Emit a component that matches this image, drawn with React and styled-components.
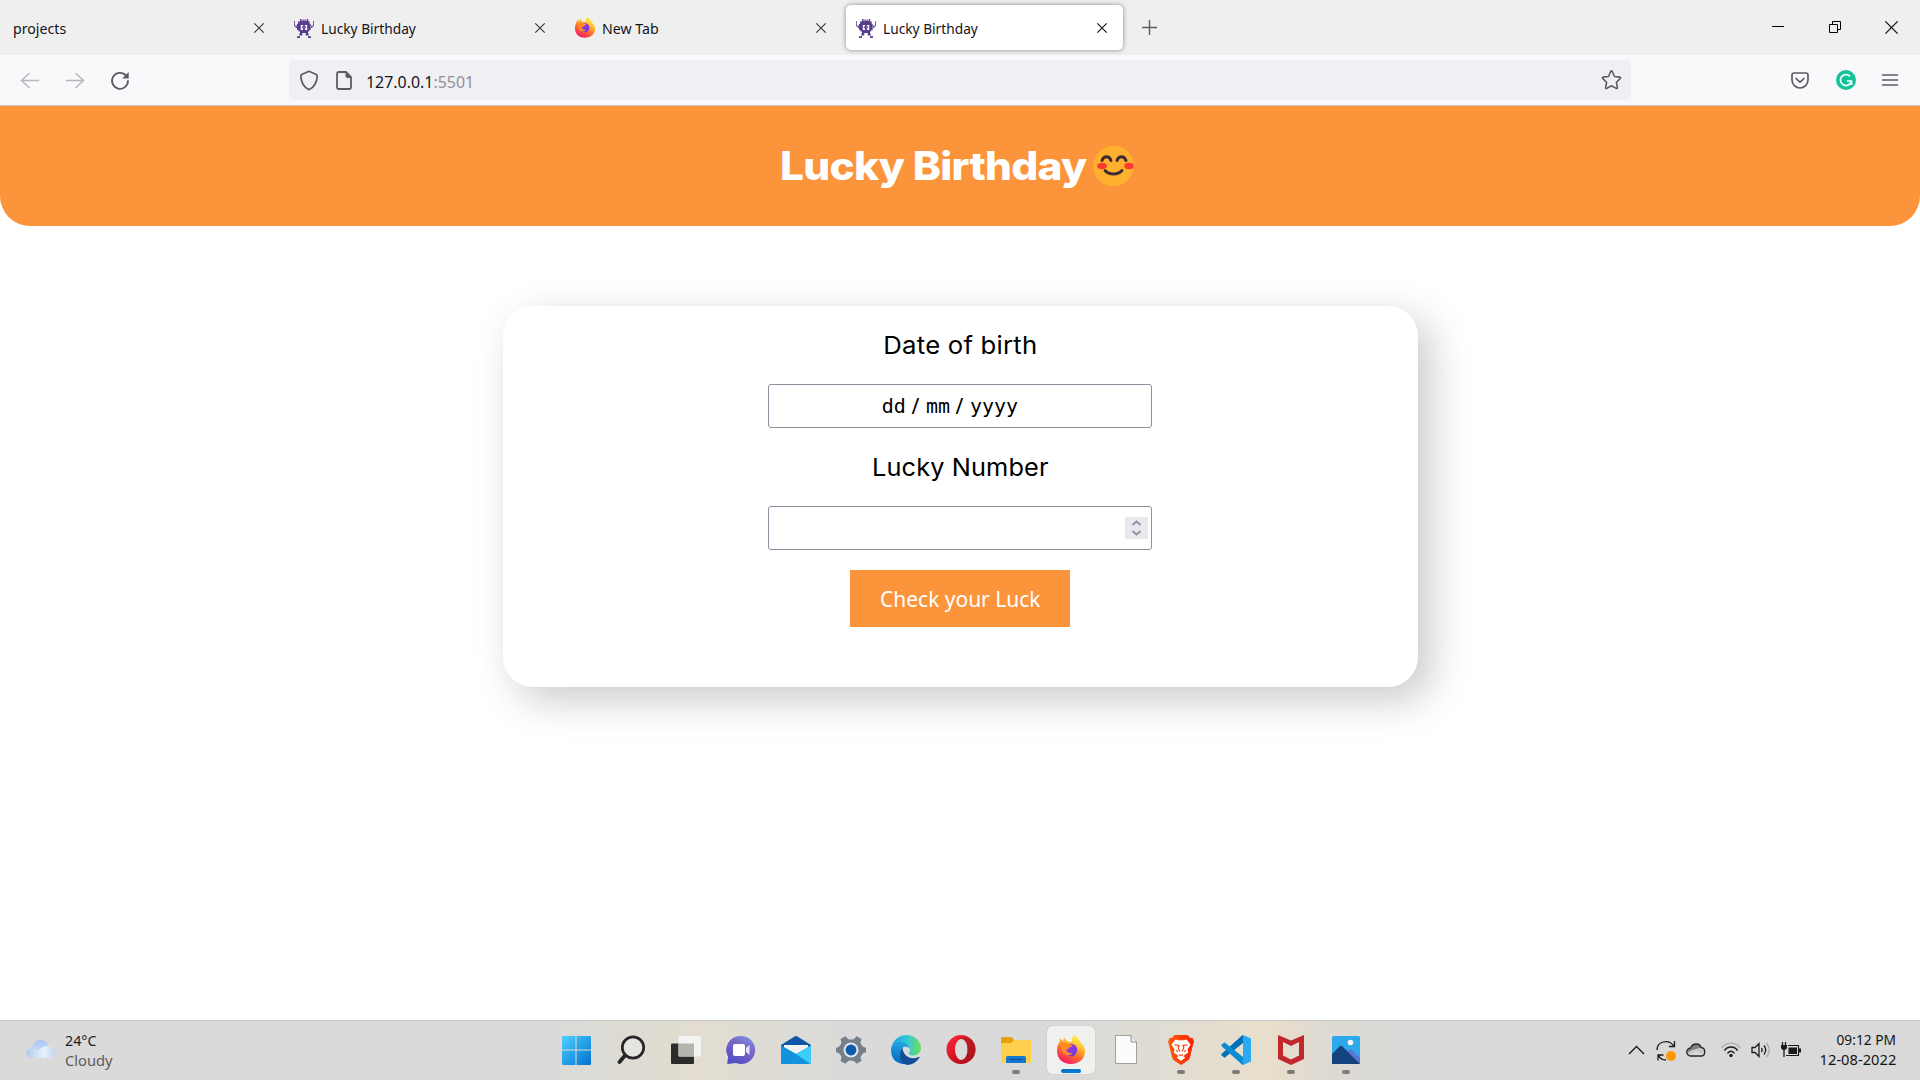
import React from "react";
import styled, { createGlobalStyle } from "styled-components";

const Global = createGlobalStyle`
  * { box-sizing: border-box; }
  body { margin: 0; background: #fff; overflow: hidden; font-family: "Noto Sans", sans-serif; }
  svg { display: block; flex: none; overflow: visible; }
`;
const Screen = styled.div`width: 1920px; height: 1080px; display: flex; flex-direction: column; overflow: hidden;`;

/* browser chrome */
const TabBar = styled.div`height: 55px; flex: none; background: #efefef; display: flex; align-items: flex-start; padding: 5px 0 0 3px;`;
const Tab = styled.div`
  width: 277px; height: 45px; margin-right: 4px; padding: 0 16px 0 10px; border-radius: 5px;
  display: flex; align-items: center; color: #15141a;
  background: ${p => (p.$active ? "#fff" : "transparent")};
  box-shadow: ${p => (p.$active ? "0 0 5px rgba(0,0,0,.42)" : "none")};
`;
const TabTitle = styled.span`
  flex: 1; font-size: 15px; line-height: 20px; margin-left: ${p => (p.$bare ? "0" : "7px")};
  white-space: nowrap;
`;
const Fit = styled.span`display: inline-block; transform-origin: ${p => p.$origin || "0 50%"}; transform: scaleX(${p => p.$x});`;
const NewTab = styled.div`width: 45px; height: 45px; display: flex; align-items: center; justify-content: center;`;
const WindowButtons = styled.div`
  margin-left: auto; width: 171px; height: 44px; display: flex; align-items: center;
`;
const WindowButton = styled.div`width: 57px; display: flex; justify-content: center;`;
const NavBar = styled.div`
  height: 51px; flex: none; background: #f9f9fb; border-bottom: 1px solid #c9c9ce;
  display: flex; align-items: center; padding: 0 22px 0 20px;
`;
const NavButtons = styled.div`width: 269px; display: flex; gap: 25px;`;
const UrlBar = styled.div`
  width: 1342px; height: 40px; border-radius: 5px; background: #f0f0f4; display: flex; align-items: center;
  padding: 0 9px 0 10px;
`;
const PageIcon = styled.div`margin-left: 17px;`;
const Url = styled.div`flex: 1; margin: 3px 0 0 14px; font-size: 16.5px; line-height: 22px; color: #15141a;`;
const Port = styled.span`color: #8f8f9d;`;
const Tools = styled.div`margin-left: auto; display: flex; gap: 26.5px; align-items: center;`;

/* page */
const Page = styled.main`flex: 1; display: flex; flex-direction: column; align-items: center; background: #fff;`;
const Header = styled.header`
  width: 100%; height: 120px; background: #fc943c; border-radius: 0 0 30px 30px;
  display: flex; align-items: center; justify-content: center; padding-right: 7px;
`;
const Title = styled.h1`
  margin: 0 8px 0 0; width: 305px; color: #fff; font: 800 39px/60px Inter, sans-serif; white-space: nowrap;
  letter-spacing: -0.7px;
`;
const Card = styled.section`
  width: 915px; height: 381px; margin-top: 80px; border-radius: 30px; background: #fff;
  box-shadow: 13px 13px 40px rgba(0,0,0,.21);
  display: flex; flex-direction: column; align-items: center; padding-top: 20px;
`;
const Label = styled.label`
  height: 38px; font: 400 24.5px/38px Inter, sans-serif; color: #000; letter-spacing: ${p => p.$spacing};
`;
const Field = styled.div`
  width: 384px; height: 44px; margin: 20px 0; border: 1px solid #8f8f9d; border-radius: 3px; background: #fff;
  display: flex; align-items: center; justify-content: ${p => (p.$number ? "flex-end" : "center")};
  padding: ${p => (p.$number ? "0 3px" : "0 20px 0 0")};
`;
const DateText = styled.div`display: flex; font: 20px/28px "DejaVu Sans Mono", monospace; color: #000;`;
const Slash = styled.span`width: 20px; padding-right: 1px; text-align: center; font-family: "Noto Sans", sans-serif; font-size: 21px;`;
const Spinner = styled.div`width: 23px; height: 22px; background: #e9e9ed; display: flex; align-items: center; justify-content: center;`;
const Submit = styled.button`
  width: 220px; height: 57px; border: 0; padding: 0; background: #fc943c; color: #fff;
  font: 400 21.5px/30px "Noto Sans", sans-serif; white-space: nowrap;
`;

/* taskbar */
const Taskbar = styled.footer`
  height: 60px; flex: none; border-top: 1px solid #c5c7c7; display: flex; align-items: center; padding-bottom: 1px;
  background: linear-gradient(90deg, #dadada 0 530px, #dddbd2 640px, #e2ddd0 700px, #dadada 850px, #dadada 1070px,
    #e0ddd2 1170px, #e9decb 1270px, #dfdad1 1320px, #d9d9d9 1400px);
`;
const Weather = styled.div`width: 552px; padding: 0 0 1px 26px; display: flex; align-items: center; gap: 9px;`;
const WeatherText = styled.div`font-size: 15px; line-height: 20px; color: #1a1a1a;`;
const Muted = styled.div`color: #5c5c5c;`;
const Apps = styled.div`display: flex; gap: 7px;`;
const AppButton = styled.div`
  width: 48px; height: 48px; border-radius: 5px; display: flex; flex-direction: column; align-items: center;
  padding-top: 9px; background: ${p => (p.$active ? "#f0f0ee" : "transparent")};
  box-shadow: ${p => (p.$active ? "0 0 1px rgba(0,0,0,.3)" : "none")};
`;
const Dot = styled.div`
  height: 4px; border-radius: 2px; margin-top: 5px; width: ${p => (p.$active ? "20px" : "8px")};
  background: ${p => (p.$active ? "#0078d4" : "#7d7b77")};
`;
const Tray = styled.div`margin-left: auto; padding-right: 24px; display: flex; align-items: center;`;
const TrayItem = styled.div`margin-right: ${p => p.$gap}px;`;
const Clock = styled.div`
  width: 78px; padding-bottom: 2px; display: flex; flex-direction: column; align-items: flex-end;
  font-size: 15px; line-height: 20px; color: #151515; white-space: nowrap;
`;

const Close = ({ size = 10, color = "#333", w = 1.1 }) => (
  <svg width={size} height={size} viewBox="0 0 10 10"><path d="M.3.3 9.7 9.7M9.7.3.3 9.7" stroke={color} strokeWidth={w} /></svg>
);
const Alien = () => (
  <svg width="20" height="20" viewBox="0 0 20 20" fill="#5a3e8e">
    <path d="M6 1h1.500v2h1V1.500h1.200V3h.8V1.500h1.200V3h1V1h1.500v2.500h1.500V6h1v6h-1.500v1.500H14V15H6v-1.500H4.500V12H3V6h1V3.500h2ZM5.500 15h2.800v2.500H6V20H3v-1.700h2.500ZM11.700 15h2.800v3.300H17V20h-3v-2.500h-2.300Z" />
    <path d="M0 3h1v4.500h2V10H1.500V8.500H0ZM20 3h-1v4.500h-2V10h1.500V8.500H20Z" opacity=".8" />
    <path d="M6.800 7h2.300v5H6.800ZM10.900 7h2.300v5h-2.300Z" fill="#fff" /><path d="M7.900 8h1.200v2.500H7.900ZM10.900 8h1.200v2.500h-1.200Z" fill="#8d78b3" />
  </svg>
);
const Firefox = ({ size = 21, id }) => (
  <svg width={size} height={size * 1.05} viewBox="0 0 28 29.4">
    <defs>
      <linearGradient id={id + "a"} x1=".8" y1=".05" x2=".3" y2="1">
        <stop offset="0" stopColor="#fff44f" /><stop offset=".35" stopColor="#ffb72e" /><stop offset=".62" stopColor="#ff6a2b" /><stop offset="1" stopColor="#f5156c" />
      </linearGradient>
      <linearGradient id={id + "b"} x1="0" y1="0" x2="1" y2="1"><stop offset="0" stopColor="#b833e1" /><stop offset="1" stopColor="#5b3fd8" /></linearGradient>
      <linearGradient id={id + "c"} x1=".5" y1="0" x2=".4" y2="1"><stop offset="0" stopColor="#fff04a" /><stop offset=".5" stopColor="#ffc936" /><stop offset="1" stopColor="#ff6b35" stopOpacity=".3" /></linearGradient>
    </defs>
    <path d="M17 0c3 2.200 5 4.300 6 7 2.500 1.800 5 5 5 9.500C28 24 22 29 14 29S0 24 0 16c0-4 1-7 2.600-9V3.500L6.200 6 7 2.200l3.300 4.300 4.700.3C15 4 15.500 2 17 0Z" fill={`url(#${id}a)`} />
    <circle cx="14" cy="15" r="6.300" fill={`url(#${id}b)`} />
    <path d="M4 9c3-2 6-1.300 8 .5 1.500 0 3 .2 3.500 1-.5 1.800-4 1.400-4.200 3.600-1 .7-2.200.3-2.200.3.500 2.600 3.500 4.500 6.500 3.300-2 4-9 3-10.700-1.700C4 13 4 11 4 9Z" fill="#ff8b26" />
    <path d="M17 0c-2 3-2 6 1 8 3 3.500 3.500 9-1 12.500 6 .5 10-5 6-13.500-1-2.700-3-4.800-6-7Z" fill={`url(#${id}c)`} />
  </svg>
);

const icons = {
  start: (
    <svg width="30" height="30" viewBox="0 0 30 30">
      <defs><linearGradient id="win" gradientUnits="userSpaceOnUse" x1="1" y1="1" x2="30" y2="30"><stop stopColor="#4fd0ff" /><stop offset="1" stopColor="#0072d0" /></linearGradient></defs>
      <path fill="url(#win)" d="M2 1h12.500v13.500H1V2q0-1 1-1Zm13.500 0H29q1 0 1 1v12.500H15.500ZM1 15.500h13.500V30H2q-1 0-1-1Zm14.500 0H30V29q0 1-1 1H15.500Z" />
    </svg>
  ),
  search: (
    <svg width="30" height="30" viewBox="0 0 30 30" fill="none" stroke="#262626" strokeLinecap="round">
      <circle cx="17" cy="12.500" r="10.700" strokeWidth="2.700" fill="#e6e4df" /><path d="M9 20.500 3.500 27" strokeWidth="3.800" />
    </svg>
  ),
  task: (
    <svg width="30" height="30" viewBox="0 0 30 30">
      <rect x="0" y="8.500" width="23" height="20.500" rx="1" fill="#2b2b29" /><rect x="7.500" y="1" width="22.500" height="20.500" rx="1" fill="#f3f3f3" />
      <path d="M7.500 8.500H23v13H8.500q-1 0-1-1Z" fill="#b4b4b1" />
    </svg>
  ),
  chat: (
    <svg width="30" height="30" viewBox="0 0 30 30">
      <defs><linearGradient id="chat" x1="1" y1="0" x2=".4" y2="1"><stop stopColor="#7f9bf3" /><stop offset=".45" stopColor="#7b68c4" /><stop offset="1" stopColor="#554fc5" /></linearGradient></defs>
      <path d="M15 1a14 14 0 1 1-5 27l-8 1q-1 0-.800-1l1-6A14 14 0 0 1 15 1Z" fill="url(#chat)" />
      <rect x="7" y="9" width="12" height="12" rx="2" fill="#fff" /><path d="M20 13l3.500-3v10L20 17Z" fill="#e3e3ff" />
    </svg>
  ),
  mail: (
    <svg width="30" height="30" viewBox="0 0 30 30">
      <path d="M0 10 13.500 1.500q1.500-1 3 0L30 10v4H0Z" fill="#0f56a5" /><path d="M3 10h24v6L15 22 3 16Z" fill="#f4f3f3" />
      <path d="M0 10.500 15 19l15-8.500V28q0 1-1 1H1q-1 0-1-1Z" fill="#25b8ef" /><path d="M0 10.500 15 19l14 10H1q-1 0-1-1Z" fill="#1391dc" /><path d="M15 19 30 10.500V29Z" fill="#3bcdf7" />
    </svg>
  ),
  settings: (
    <svg width="30" height="30" viewBox="0 0 30 30">
      <path d="M9.500 1.200 12 4q3 1 6 0l2.500-2.800L25.500 4l-1 3.800q1 2.700 3 4.200l2.500.8v4.400l-2.500.8q-2 1.500-3 4.200l1 3.800-5 2.800L18 26q-3-1-6 0l-2.500 2.800-5-2.800 1-3.800q-1-2.700-3-4.200L0 17.200v-4.400l2.500-.8q2-1.500 3-4.200L4.500 4Z" fill="#75808a" />
      <circle cx="15" cy="15" r="7.500" fill="#dfe5e9" /><circle cx="15" cy="15" r="5.400" fill="#0b5cad" />
    </svg>
  ),
  edge: (
    <svg width="30" height="30" viewBox="0 0 30 30">
      <defs>
        <linearGradient id="edgeTop"><stop stopColor="#1ca2df" /><stop offset=".5" stopColor="#34c6d9" /><stop offset="1" stopColor="#6ce05a" /></linearGradient>
        <linearGradient id="edgeSide" x1="0" y1="0" x2="0" y2="1"><stop stopColor="#1fa5e3" /><stop offset="1" stopColor="#0863bd" /></linearGradient>
      </defs>
      <path d="M1 11C3 4 9 0 15 0c9 0 15 6.500 15 13 0 5-4 7.500-8 7.500-3.500 0-5-1.500-4-3 2.500-3 .5-7.500-4-7.500Z" fill="url(#edgeTop)" />
      <path d="M0 15C0 9 5 6.800 9.500 7c5 .2 9 3.500 9 7.500-1-2-2-3-4-3-3 0-4 3-3.500 6 1 6 7 9 13 8C19 31 0 32 0 15Z" fill="url(#edgeSide)" />
      <path d="M11.500 13C7 20 9 28 16 30c5 0 10-3 12.500-7.500.3-.8-.2-1-1-.6-6 3-15 1-16-8.900Z" fill="#124d95" />
    </svg>
  ),
  opera: (
    <svg width="30" height="30" viewBox="0 0 30 30">
      <defs><linearGradient id="opera" x1="0" y1="0" x2=".7" y2="1"><stop stopColor="#ff2939" /><stop offset="1" stopColor="#bc0918" /></linearGradient></defs>
      <path fillRule="evenodd" d="M15 0a14.500 14.500 0 1 0 0 29 14.500 14.500 0 0 0 0-29Zm.500 4c4 0 6 4.500 6 10.500S19 25 15.500 25 9 20 9 14.500 12 4 15.500 4Z" fill="url(#opera)" />
      <path d="M11 4.500C18-1.500 29.500 3 29.500 14.500S18 30 11 24.500c6 2.500 10.500-2.500 10.500-10S17 2 11 4.500Z" fill="#a51b20" opacity=".6" />
    </svg>
  ),
  folder: (
    <svg width="30" height="30" viewBox="0 0 30 30">
      <path d="M0 3q0-1 1-1h9q1 0 1.500 1L13 5h15q2 0 2 2v20q0 1-1 1H1q-1 0-1-1Z" fill="#e3a20d" /><path d="M0 8h10l3-3h17v22q0 1-1 1H1q-1 0-1-1Z" fill="#ffd04d" />
      <path d="M5 28v-5q0-2 2-2h16q2 0 2 2v5Z" fill="#1277cd" /><path d="M9 24.500h12" stroke="#0c539b" strokeWidth="1.300" />
    </svg>
  ),
  firefox: <Firefox size={28} id="ffTask" />,
  file: (
    <svg width="30" height="30" viewBox="0 0 30 30"><path d="M4.500.5h15.500l5.500 6.500v21.500h-21Z" fill="#fbfbfb" stroke="#a0a09d" /><path d="M20 .5V7h5.500" fill="#eee" stroke="#91918f" /></svg>
  ),
  brave: (
    <svg width="30" height="30" viewBox="0 0 30 30">
      <defs><linearGradient id="brave"><stop stopColor="#ff5b08" /><stop offset="1" stopColor="#fa2106" /></linearGradient></defs>
      <path d="M8.500 0h13l3 3 2-.3 1.500 4-1 3-3 12.500q-.5 2-2.500 3.500L15 30l-6.500-4.300Q6.500 24.200 6 22.200L3 9.700 2 6.700l1.800-4 2 .3Z" fill="url(#brave)" />
      <path d="m9.500 4.500 3 .8h5l3-.8 4 5-3 5 .8 3-5 3.500 2 1.500-4.300 3.500-4.300-3.500 2-1.500-5-3.500.8-3-3-5Z" fill="#fff" />
      <path d="m8.500 9.800 4.500.7-.8 2.300 1.500 3.700M21.500 9.800l-4.500.7.800 2.300-1.500 3.700M10.500 15l1 2M19.500 15l-1 2M13 19.500l2 1 2-1" stroke="#fb4610" fill="none" strokeWidth="1.200" />
    </svg>
  ),
  code: (
    <svg width="30" height="30" viewBox="0 0 30 30">
      <path d="m1 18.500 20-18q.5-.5 1-.5v8L4.500 22q-1 1-2 0L.7 20.400q-1-1 .3-1.900Z" fill="#0070b8" />
      <path d="m1 11.500 20 18q.5.500 1 .5v-8L4.500 8q-1-1-2 0L.7 9.600q-1 1 .3 1.900Z" fill="#0b8bd3" />
      <path d="M22 0 30 3.500v23L22 30Z" fill="#2aa9f4" />
    </svg>
  ),
  mcafee: (
    <svg width="30" height="30" viewBox="0 0 30 30"><path fillRule="evenodd" d="m2 0 13 5.500L28 0v24l-13 6L2 24Zm5 7v13.500l8 4 8-4V7l-8 4Z" fill="#c0282c" /></svg>
  ),
  photos: (
    <svg width="30" height="30" viewBox="0 0 30 30">
      <rect x="1" y="1" width="28" height="28" rx="1.500" fill="#2ca9ea" /><path d="m15 18 3-3q1.500-1.300 3 0l8 8v5.500H18Z" fill="#5a76d2" />
      <path d="m1 19 7.500-7.500q1.500-1.300 3 0L29 29H2q-1 0-1-1Z" fill="#154380" /><circle cx="19.500" cy="7.500" r="2.800" fill="#f4f5f5" />
    </svg>
  ),
};
const apps = ["start", "search", "task", "chat", "mail", "settings", "edge", "opera", "folder", "firefox", "file", "brave", "code", "mcafee", "photos"];
const running = ["folder", "firefox", "brave", "code", "mcafee", "photos"];

export default function App() {
  return (
    <Screen>
      <Global />
      <TabBar>
        <Tab><TabTitle $bare><Fit $x={0.945}>projects</Fit></TabTitle><Close /></Tab>
        <Tab><Alien /><TabTitle><Fit $x={0.915}>Lucky Birthday</Fit></TabTitle><Close /></Tab>
        <Tab><Firefox size={20} id="ffTab" /><TabTitle><Fit $x={0.945}>New Tab</Fit></TabTitle><Close /></Tab>
        <Tab $active><Alien /><TabTitle><Fit $x={0.915}>Lucky Birthday</Fit></TabTitle><Close color="#111" /></Tab>
        <NewTab><svg width="15" height="15" viewBox="0 0 15 15"><path d="M7.500 0v15M0 7.500h15" stroke="#5b5b66" strokeWidth="1.400" /></svg></NewTab>
        <WindowButtons>
          <WindowButton><svg width="12" height="12" viewBox="0 0 12 12"><path d="M0 5.500h12" stroke="#000" /></svg></WindowButton>
          <WindowButton><svg width="12" height="12" viewBox="0 0 12 12" fill="none" stroke="#000"><path d="M.5 3.500h8v8h-8ZM3.500 3.500v-3h8v8h-3" /></svg></WindowButton>
          <WindowButton><Close size={13} color="#111" w={1} /></WindowButton>
        </WindowButtons>
      </TabBar>
      <NavBar>
        <NavButtons>
          <svg width="20" height="20" viewBox="0 0 20 20" fill="none" stroke="#b6b6bb" strokeWidth="1.500" strokeLinecap="round" strokeLinejoin="round"><path d="M18.500 10.500H1.500M9 3.500l-7.500 7 7.500 7" /></svg>
          <svg width="20" height="20" viewBox="0 0 20 20" fill="none" stroke="#b6b6bb" strokeWidth="1.500" strokeLinecap="round" strokeLinejoin="round"><path d="M1.500 10.500h17M11 3.500l7.500 7-7.500 7" /></svg>
          <svg width="20" height="20" viewBox="0 0 20 20" fill="none" stroke="#5b5b66" strokeWidth="1.800" strokeLinecap="round"><path d="M18 10.800A8 8 0 1 1 15.500 5" /><path d="M18.700 2v6.500h-6.500Z" fill="#5b5b66" stroke="none" /></svg>
        </NavButtons>
        <UrlBar>
          <svg width="20" height="21" viewBox="0 0 20 21" fill="none" stroke="#5b5b66" strokeWidth="1.700" strokeLinejoin="round"><path d="m10 1.300 7.300 3.200q1 .5.900 1.600c-.3 6-3 11-8.200 13.600C4.800 17.100 2.100 12.100 1.800 6.100q-.1-1.100.9-1.600Z" /></svg>
          <PageIcon><svg width="16" height="19" viewBox="0 0 16 19"><path d="M3 1h7l5 5v10q0 2-2 2H3q-2 0-2-2V3q0-2 2-2Z" fill="none" stroke="#5b5b66" strokeWidth="1.800" /><path d="M9.500 1v4q0 2 2 2H15Z" fill="#5b5b66" /></svg></PageIcon>
          <Url><Fit $x={0.965}>127.0.0.1<Port>:5501</Port></Fit></Url>
          <svg width="21" height="20" viewBox="0 0 21 20" fill="none" stroke="#5b5b66" strokeWidth="1.600" strokeLinejoin="round"><path d="M9.700 1.500q.8-1.300 1.600 0l2.200 5 5.200.6q1.400.3.500 1.500l-3.800 3.700 1 5.200q.1 1.500-1.200.9l-4.700-2.600-4.700 2.600q-1.300.6-1.200-.9l1-5.200L1.800 8.600q-.9-1.200.5-1.500l5.200-.6Z" /></svg>
        </UrlBar>
        <Tools>
          <svg width="18" height="17" viewBox="0 0 18 17" fill="none" stroke="#5b5b66" strokeWidth="1.700" strokeLinecap="round" strokeLinejoin="round"><path d="M3 1h12q2 0 2 2v5a8 8 0 0 1-16 0V3q0-2 2-2Z" /><path d="m5 6.500 4 3.700 4-3.700" /></svg>
          <svg width="20" height="20" viewBox="0 0 20 20"><circle cx="10" cy="10" r="10" fill="#15c39a" /><path d="M14 6.300a5.500 5.500 0 1 0 1.300 5M11 11h4.500v4" fill="none" stroke="#fff" strokeWidth="1.700" /></svg>
          <svg width="16" height="13" viewBox="0 0 16 13"><path d="M.5 1h15M.5 6h15M.5 11h15" stroke="#5b5b66" strokeWidth="1.400" strokeLinecap="round" /></svg>
        </Tools>
      </NavBar>
      <Page>
        <Header>
          <Title><Fit $x={1.088}>Lucky Birthday</Fit></Title>
          <svg width="41" height="40" viewBox="0 0 41 40" fill="none" strokeLinecap="round">
            <circle cx="20.500" cy="20" r="20.300" fill="#ffb02e" /><ellipse cx="9" cy="20" rx="5" ry="3.200" fill="#fb3a32" /><ellipse cx="36" cy="20" rx="4.700" ry="3.200" fill="#fb3a32" />
            <path d="M9 14.500c1.500-5 7.500-5 9 0M24 14.500c1.500-5 7.500-5 9 0M12 24.500c4 4.700 13 4.700 17 0" stroke="#402a32" strokeWidth="2.900" />
          </svg>
        </Header>
        <Card>
          <Label $spacing="0.2px"><Fit $x={1.05} $origin="50% 50%">Date of birth</Fit></Label>
          <Field><DateText><span>dd</span><Slash>/</Slash><span>mm</span><Slash>/</Slash><span>yyyy</span></DateText></Field>
          <Label $spacing="0.1px"><Fit $x={1.035} $origin="50% 50%">Lucky Number</Fit></Label>
          <Field $number>
            <Spinner><svg width="9" height="16" viewBox="0 0 9 16" fill="none" stroke="#8f8f9d" strokeWidth="1.800"><path d="m.5 5 4-3.500 4 3.500M.5 11l4 3.500 4-3.500" /></svg></Spinner>
          </Field>
          <Submit><Fit $x={0.975} $origin="50% 50%">Check your Luck</Fit></Submit>
        </Card>
      </Page>
      <Taskbar>
        <Weather>
          <svg width="30" height="20" viewBox="0 0 30 20">
            <defs>
              <linearGradient id="cloudBack" x1="0" y1="0" x2="0" y2="1"><stop stopColor="#a9c6f5" /><stop offset="1" stopColor="#d3e3f9" /></linearGradient>
              <linearGradient id="cloudFront"><stop stopColor="#b3caea" /><stop offset=".6" stopColor="#e8f0fb" /><stop offset="1" stopColor="#c0d6f2" /></linearGradient>
            </defs>
            <circle cx="14.500" cy="8.500" r="8.500" fill="url(#cloudBack)" /><path d="M6 8q4 0 6 3 2-4 8.500-5C26 6 30 9 30 12.500S27 18 23 18H5c-3 0-5-2-5-5S3 8 6 8Z" fill="url(#cloudFront)" />
          </svg>
          <WeatherText><div><Fit $x={0.95}>24°C</Fit></div><Muted><Fit $x={0.98}>Cloudy</Fit></Muted></WeatherText>
        </Weather>
        <Apps>
          {apps.map(name => (
            <AppButton key={name} $active={name === "firefox"}>
              {icons[name]}
              {running.includes(name) && <Dot $active={name === "firefox"} />}
            </AppButton>
          ))}
        </Apps>
        <Tray>
          <TrayItem $gap={11}><svg width="17" height="10" viewBox="0 0 17 10"><path d="m1 9 7.500-7.500L16 9" fill="none" stroke="#1b1b1b" strokeWidth="1.400" /></svg></TrayItem>
          <TrayItem $gap={10}>
            <svg width="20" height="21" viewBox="0 0 20 21" fill="none" stroke="#1b1b1b" strokeWidth="1.300"><path d="M1 10C1 2 12-2 18 6M18.500 1v5.500H13M10 20c-3 0-6-1.500-7.500-4.500M2 20.500V15h5.500" /><circle cx="15" cy="16" r="5" fill="#ff9800" stroke="none" /></svg>
          </TrayItem>
          <TrayItem $gap={15}>
            <svg width="20" height="14" viewBox="0 0 20 14"><path d="M5 5C7-.5 14 0 15 4.500L7 9.500 1 10q0-4 4-5Z" fill="#808080" /><path d="M1 10l4-2.500L15 4.500c4 .5 5 5 2 7.500l-7-4-7 4.500Z" fill="#c9c9c9" /><path d="M5 13a4 4 0 0 1-.5-8C7-.5 14 0 15 4.500c5 .5 5 8.500 0 8.500Z" fill="none" stroke="#252525" strokeWidth="1.300" /></svg>
          </TrayItem>
          <TrayItem $gap={10}>
            <svg width="20" height="16" viewBox="0 0 20 16" fill="none" stroke="#1b1b1b" strokeWidth="1.500"><path d="M.5 6C5-.5 15-.5 19.500 6" stroke="#b3b3b3" /><path d="M3.500 8.500c3-4.700 10-4.700 13 0M6.500 11.500c1.700-3 5.300-3 7 0" /><circle cx="10" cy="13.500" r="1.700" fill="#1b1b1b" stroke="none" /></svg>
          </TrayItem>
          <TrayItem $gap={10}>
            <svg width="20" height="16" viewBox="0 0 20 16" fill="none" stroke="#1b1b1b" strokeWidth="1.300"><path d="M1 5.500h3l4-4v13l-4-4H1ZM10.500 6q1.500 2 0 4M13 3.500q3.500 4.500 0 9" /><path d="M15.500 1q5.500 7 0 14" stroke="#aaa" /></svg>
          </TrayItem>
          <TrayItem $gap={17}>
            <svg width="20" height="16" viewBox="0 0 20 16"><path d="M7 3.500h10.500v10H5" fill="none" stroke="#1b1b1b" strokeWidth="1.100" /><path d="M18 6.500h2v4h-2ZM7.500 5.500H16v6.500H7.500Z" fill="#1b1b1b" /><path d="M1.500 0v3M4.500 0v3M3 6v9" stroke="#1b1b1b" strokeWidth="1.300" /><path d="M0 3h6v2q0 3-3 3T0 5Z" fill="#1b1b1b" /></svg>
          </TrayItem>
          <Clock><div><Fit $x={0.915} $origin="100% 50%">09:12 PM</Fit></div><div><Fit $x={0.98} $origin="100% 50%">12-08-2022</Fit></div></Clock>
        </Tray>
      </Taskbar>
    </Screen>
  );
}
